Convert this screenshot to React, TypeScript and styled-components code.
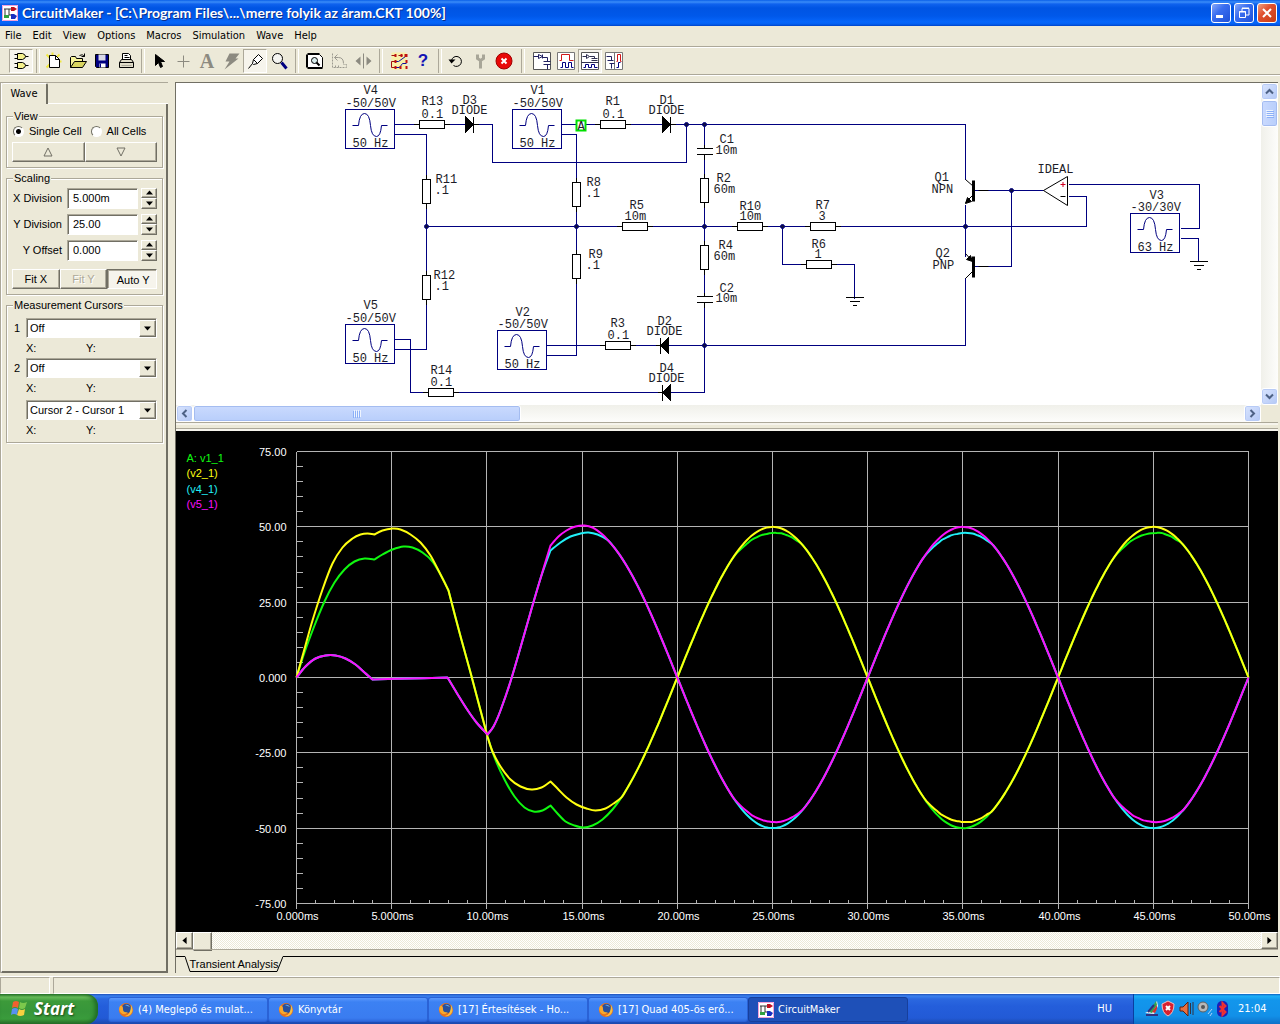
import React from 'react';
import styled, { createGlobalStyle, css } from 'styled-components';

const FACE = '#ece9d8';
const SHADOW = '#aca899';
const DARK = '#716f64';
const NAVY = '#000080';

const UI_FONT = '"DejaVu Sans Condensed", "Noto Sans", sans-serif';
const PANEL_FONT = '"Liberation Sans", Arial, sans-serif';

const GlobalStyle = createGlobalStyle`
  * { box-sizing: border-box; }
  body { margin: 0; background: ${FACE}; }
  button, input, select, fieldset { font: inherit; color: inherit; margin: 0; padding: 0; border: 0; }
  svg { display: block; flex: none; }
`;

const Desktop = styled.div`
  display: flex;
  flex-direction: column;
  min-height: 100vh;
  background: ${FACE};
  color: #000;
  font: 11px/14px ${PANEL_FONT};
  overflow: hidden;
`;

/* ---------- title bar ---------- */

const TitleBar = styled.header`
  display: flex;
  align-items: center;
  gap: 4px;
  height: 26px;
  padding: 0 3px 0 2px;
  background: linear-gradient(#0a5fe8 0, #3a8cf8 2px, #0f62ee 4px, #0054e3 8px, #0058ea 16px, #0666fb 22px, #0461f2 24px, #0043c8 26px);
`;

const Title = styled.h1`
  flex: 1;
  margin: 0;
  color: #fff;
  font: 700 14px/20px Lato, sans-serif;
  text-shadow: 1px 1px #0a2f8c;
  white-space: nowrap;
`;

const WindowButtons = styled.div`
  display: flex;
  gap: 3px;
`;

const WindowButton = styled.button<{ $close?: boolean }>`
  display: grid;
  place-items: center;
  width: 20px;
  height: 20px;
  border: 1px solid #fff;
  border-radius: 3px;
  background: ${p => (p.$close ? 'linear-gradient(135deg, #f0a080, #e05030 40%, #c83c14)' : 'linear-gradient(135deg, #88a8f8, #3a6ef0 40%, #1e50d8)')};
`;

/* ---------- menu and toolbar ---------- */

const MenuBar = styled.nav`
  display: flex;
  gap: 11px;
  height: 21px;
  padding: 0 5px;
  border-bottom: 1px solid ${SHADOW};
  font: 11px/18px ${UI_FONT};
`;

const MenuButton = styled.button`
  background: none;
`;

const ToolBar = styled.div`
  display: flex;
  align-items: center;
  height: 28px;
  padding-left: 9px;
  border-top: 1px solid #fff;
  border-bottom: 1px solid ${SHADOW};
  box-shadow: 0 1px #fff;
`;

const ToolButton = styled.button<{ $on?: boolean }>`
  display: grid;
  place-items: center;
  width: 24px;
  height: 24px;
  background: none;
  ${p =>
    p.$on &&
    css`
      background: #f6f4ec;
      border: 1px solid;
      border-color: ${SHADOW} #fff #fff ${SHADOW};
    `}
`;

const Separator = styled.span<{ $width: number }>`
  display: flex;
  justify-content: center;
  width: ${p => p.$width}px;
  height: 24px;
  &::before {
    content: '';
    width: 2px;
    border-left: 1px solid ${SHADOW};
    border-right: 1px solid #fff;
  }
`;

/* ---------- work area ---------- */

const Work = styled.main`
  display: flex;
  flex: 1;
  gap: 7px;
  padding: 7px 2px 3px 0;
`;

const Side = styled.aside`
  display: flex;
  flex-direction: column;
  flex: none;
  width: 168px;
  border-left: 1px solid ${SHADOW};
  border-top: 1px solid ${SHADOW};
`;

const SideTabs = styled.div`
  display: flex;
  height: 21px;
  border-left: 1px solid #fff;
`;

const SideTab = styled.button`
  width: 46px;
  background: ${FACE};
  border-top: 1px solid #fff;
  border-right: 2px solid ${DARK};
  border-radius: 2px 2px 0 0;
  font: 11px/18px ${UI_FONT};
`;

const TabLine = styled.span`
  flex: 1;
  border-bottom: 1px solid #fff;
`;

const SideBody = styled.div`
  display: flex;
  flex-direction: column;
  flex: 1;
  gap: 4px;
  padding: 6px 3px 6px 4px;
  border: solid;
  border-width: 0 2px 2px 1px;
  border-color: #fff ${DARK} ${DARK} #fff;
`;

const Group = styled.fieldset`
  display: flex;
  flex-direction: column;
  min-width: 0;
  padding: 0 5px 5px;
  border: 1px solid ${SHADOW};
  box-shadow: inset 1px 1px #fff, 1px 1px #fff;
`;

const Legend = styled.legend`
  margin-left: 1px;
  padding: 0 1px;
  background: ${FACE};
  line-height: 13px;
`;

const RadioRow = styled.div`
  display: flex;
  gap: 8px;
  height: 19px;
  padding-top: 1px;
`;

const RadioLabel = styled.label`
  display: flex;
  align-items: center;
  gap: 5px;
  height: 14px;
  padding-left: 1px;
`;

const Radio = styled.input`
  appearance: none;
  width: 11px;
  height: 11px;
  border: 1px solid;
  border-color: ${DARK} #fff #fff ${DARK};
  border-radius: 50%;
  background: #fff;
  &:checked {
    background: radial-gradient(circle, #000 0 2px, #fff 3px);
  }
`;

const ButtonRow = styled.div<{ $spaced?: boolean }>`
  display: flex;
  height: 20px;
  margin-top: ${p => (p.$spaced ? 6 : 0)}px;
`;

const raised = css`
  border: 1px solid;
  border-color: #fff ${DARK} ${DARK} #fff;
  box-shadow: inset -1px -1px ${SHADOW};
`;

const PanelButton = styled.button<{ $down?: boolean }>`
  display: grid;
  place-items: center;
  flex: 1;
  background: ${FACE};
  ${raised}
  &:disabled {
    color: ${SHADOW};
    text-shadow: 1px 1px #fff;
  }
  ${p =>
    p.$down &&
    css`
      padding: 2px 0 0 2px;
      background: #f6f4ec;
      border-color: ${DARK} #fff #fff ${DARK};
      box-shadow: inset 1px 1px ${SHADOW};
    `}
`;

const Field = styled.div`
  display: flex;
  align-items: center;
  justify-content: flex-end;
  height: 26px;
  gap: 3px;
`;

const FieldLabel = styled.label`
  padding-right: 2px;
`;

const sunken = css`
  background: #fff;
  border: 1px solid;
  border-color: ${SHADOW} #fff #fff ${SHADOW};
  box-shadow: inset 1px 1px ${DARK};
`;

const FieldInput = styled.input`
  width: 71px;
  height: 21px;
  padding-left: 5px;
  ${sunken}
`;

const Spin = styled.div`
  display: flex;
  flex-direction: column;
  width: 16px;
  height: 21px;
`;

const SpinButton = styled.button`
  display: grid;
  place-items: center;
  flex: 1;
  background: ${FACE};
  ${raised}
`;

const CursorGrid = styled.div`
  display: grid;
  grid-template-columns: 14px 1fr;
  padding-top: 6px;
`;

const CursorNumber = styled.label`
  padding: 3px 0 0 2px;
`;

const SelectBox = styled.div`
  display: grid;
  grid-template-columns: 1fr 17px;
  height: 20px;
  ${sunken}
`;

const Select = styled.select`
  grid-area: 1 / 1 / 2 / 3;
  appearance: none;
  padding-left: 3px;
  background: none;
`;

const SelectArrow = styled.span`
  grid-area: 1 / 2;
  display: grid;
  place-items: center;
  margin-top: 1px;
  background: ${FACE};
  pointer-events: none;
  ${raised}
`;

const Readout = styled.div<{ $height: number }>`
  grid-column: 2;
  display: grid;
  grid-template-columns: 60px 1fr;
  height: ${p => p.$height}px;
  padding-top: 3px;
`;

const Right = styled.section`
  display: flex;
  flex-direction: column;
  flex: 1;
  min-width: 0;
  border-top: 1px solid ${DARK};
  border-left: 1px solid ${DARK};
`;

const SchematicPane = styled.div`
  display: grid;
  grid-template-columns: 1fr 17px;
  grid-template-rows: 322px 17px;
  background: #fff;
`;

const Canvas = styled.div`
  min-width: 0;
  overflow: hidden;
`;

const Track = styled.div<{ $vertical?: boolean }>`
  display: flex;
  flex-direction: ${p => (p.$vertical ? 'column' : 'row')};
  justify-content: space-between;
  background: linear-gradient(${p => (p.$vertical ? '90deg' : '180deg')}, #f0f0ea, #fdfdfb);
`;

const ScrollStart = styled.div<{ $vertical?: boolean }>`
  display: flex;
  flex-direction: ${p => (p.$vertical ? 'column' : 'row')};
`;

const Corner = styled.span`
  background: ${FACE};
`;

const ScrollButton = styled.button`
  display: grid;
  place-items: center;
  width: 17px;
  height: 17px;
  border: 1px solid #fff;
  border-radius: 3px;
  background: linear-gradient(135deg, #d8e4fe, #b4c8f6);
  box-shadow: inset 0 0 0 1px #b8cbf6;
`;

const Thumb = styled.span<{ $vertical?: boolean }>`
  display: grid;
  place-items: center;
  width: ${p => (p.$vertical ? 17 : 328)}px;
  height: ${p => (p.$vertical ? 27 : 17)}px;
  border: 1px solid #fff;
  border-radius: 3px;
  background: linear-gradient(${p => (p.$vertical ? '90deg' : '180deg')}, #cadafe, #b8cefb);
  box-shadow: inset 0 0 0 1px #a4bcf0;
`;

const Splitter = styled.div`
  height: 9px;
  border-top: 1px solid ${SHADOW};
  background: linear-gradient(#f6f4ec 0 2px, ${FACE} 2px 5px, ${SHADOW} 5px 6px, #f6f4ec 6px);
`;

const WavePane = styled.div`
  flex: 1;
  min-height: 501px;
  overflow: hidden;
  background: #000;
`;

const ClassicTrack = styled.div`
  display: flex;
  height: 17px;
  background: repeating-conic-gradient(#fff 0 25%, ${FACE} 0 50%) 0 0 / 2px 2px;
`;

const ClassicButton = styled.button`
  display: grid;
  place-items: center;
  width: 17px;
  background: ${FACE};
  ${raised}
`;

const ClassicThumb = styled.span`
  flex: 1;
  &::before {
    content: '';
    display: block;
    width: 17px;
    height: 17px;
    background: ${FACE};
    ${raised}
  }
`;

const SheetTabs = styled.div`
  display: flex;
  height: 24px;
  padding-top: 6px;
  border-top: 1px solid ${SHADOW};
`;

const SheetLine = styled.span<{ $fill?: boolean }>`
  width: 9px;
  flex: ${p => (p.$fill ? '1' : 'none')};
  border-top: 1px solid #000;
`;

const SheetTab = styled.button`
  display: grid;
  width: 98px;
  height: 17px;
  background: none;
  line-height: 16px;
  white-space: nowrap;
  > * { grid-area: 1 / 1; }
`;

const StatusBar = styled.footer`
  display: flex;
  gap: 3px;
  height: 18px;
  border-top: 1px solid #fff;
`;

const StatusCell = styled.span<{ $fill?: boolean }>`
  width: 50px;
  flex: ${p => (p.$fill ? '1' : 'none')};
  border: 1px solid;
  border-color: ${SHADOW} #fff #fff ${SHADOW};
`;

/* ---------- taskbar ---------- */

const TaskBar = styled.footer`
  display: flex;
  align-items: stretch;
  height: 30px;
  color: #fff;
  font: 11px/14px ${UI_FONT};
  background: linear-gradient(#1f50b8 0, #3a80ee 2px, #2b68e0 5px, #245edb 12px, #225ad6 24px, #1b48ac 30px);
`;

const Start = styled.button`
  display: flex;
  align-items: center;
  gap: 6px;
  width: 98px;
  padding-left: 10px;
  border-radius: 0 12px 12px 0;
  color: #fff;
  font: italic 700 17px/22px "Open Sans", sans-serif;
  text-shadow: 1px 1px 2px #1a4a14;
  background: linear-gradient(#2c7c2c 0, #6cc05c 3px, #3c9a3a 7px, #37963a 18px, #3a9c3c 25px, #2a6e2a 30px);
  box-shadow: inset -3px 0 4px #1f6a24;
`;

const Tasks = styled.div`
  display: flex;
  flex: 1;
  padding: 3px 0 2px 10px;
`;

const Task = styled.button<{ $on?: boolean }>`
  display: flex;
  align-items: center;
  gap: 4px;
  width: 160px;
  padding-left: 9px;
  border: 1px solid ${p => (p.$on ? '#173f9c' : '#2a62d6')};
  border-radius: 3px;
  text-align: left;
  white-space: nowrap;
  background: ${p => (p.$on ? '#1e50b8' : 'linear-gradient(#5a98fc 0, #3c81f3 4px, #3a7cf0 20px, #2f6ade)')};
`;

const Language = styled.span`
  padding: 8px 21px 0 0;
`;

const Tray = styled.div`
  display: flex;
  align-items: center;
  gap: 3px;
  width: 147px;
  padding-left: 10px;
  border-left: 1px solid #0a3ea0;
  background: linear-gradient(#0c60c0 0, #1cb0f8 2px, #1296ec 6px, #1290e8 22px, #0f70c8 30px);
`;

const Clock = styled.time`
  margin-left: 7px;
`;

/* ---------- icons ---------- */

const Icon = ({ children, size = 18 }: { children: React.ReactNode; size?: number }) => (
  <svg width={size} height={size} viewBox="-0.5 -0.5 18 18" fill="none" stroke="#000" aria-hidden>
    {children}
  </svg>
);

const icons: Record<string, React.ReactNode> = {
  gates: (
    <>
      <path d="M5 1h5q3 1 3 3t-3 3H5zM5 10h5q3 1 3 3t-3 3H5z" fill="#f4f08c" />
      <path d="M2 2h3M2 6h3M13 4h3M2 11h3M2 15h3M13 13h3" />
    </>
  ),
  new: (
    <>
      <path d="M1 2l3 3M14 2l-3 3M1 15l3-3M16 9h-3M7 0v3" stroke="#f0e840" strokeWidth="2" />
      <path d="M4 3h6l4 4v8H4z" fill="#fff" />
      <path d="M10 3v4h4" />
    </>
  ),
  open: (
    <>
      <path d="M1 15V5l1-1h4l1 2h6v3" fill="#f7f49a" />
      <path d="M1 15l4-6h12l-4 6z" fill="#d8d460" />
      <path d="M10 3q3-2 5 1M15 1v3h-3" />
    </>
  ),
  save: (
    <>
      <path d="M2 2h13v13H3l-1-1z" fill={NAVY} />
      <path d="M5 2h7v6H5z" fill="#d8d8e8" stroke="none" />
      <path d="M6 11h6v4H6z" fill="#fff" stroke="none" />
      <path d="M7 11v4" stroke={NAVY} />
    </>
  ),
  print: (
    <>
      <path d="M5 7V1h6l2 2v4" fill="#fff" />
      <path d="M2 10l2-3h10l2 3v5H2zM2 10h14M7 3h3M7 5h5" fill="#e0dcc8" />
      <path d="M4 13h10" stroke={SHADOW} />
    </>
  ),
  arrow: <path d="M5 2v11l3-3 2 5 2-1-2-5h4z" fill="#000" />,
  plus: <path d="M9 3v12M3 9h12" stroke="#8c8a80" />,
  bolt: <path d="M7 1h10l-4 5h3L2 17l5-8H3z" fill="#8c8a80" stroke="none" />,
  probe: <path d="M2 16l4-5M6 11l1-4 5-5 4 4-5 5-4 1zM7 7l4 4" fill="#fff" />,
  zoom: (
    <>
      <circle cx="7" cy="6" r="5" fill="#f4f4f0" />
      <path d="M11 10l5 6" stroke={NAVY} strokeWidth="3" />
    </>
  ),
  fit: (
    <>
      <path d="M1 2h12l3 3v10H1z" fill="#fff" />
      <path d="M1 1h12M0 2v13M1 16h15" />
      <circle cx="8" cy="8" r="3" fill="#d8ecec" />
      <path d="M10 10l3 3" strokeWidth="2" />
    </>
  ),
  rotate: (
    <g stroke="#9c9a90">
      <path d="M2 1v14h14v-3h-3M5 15v-3M8 15v-3" strokeDasharray="2 1" />
      <path d="M4 5h4q5 0 5 6M7 2L4 5l3 3" />
    </g>
  ),
  mirror: (
    <>
      <path d="M9 1v15" stroke="#8c8a80" />
      <path d="M6 4v9L1 8.500zM12 4v9l5-4.500z" fill="#8c8a80" stroke="none" />
    </>
  ),
  netlist: (
    <>
      <path d="M1 0h15v17H1z" fill="#f8f0a8" stroke="none" />
      <path d="M1 3h4M1 9h4M1 15h4M1 9v6M8 3h4" stroke="#a01010" />
      <path d="M5 9h3l7-5M5 15h4l3-4h4" stroke="#1010a0" />
      <path d="M4 3h2M10 3h2M14 3h3M4 9h2M15 9h2M4 15h2M9 15h2M15 15h2" stroke="#c01010" strokeWidth="3" />
    </>
  ),
  reset: (
    <>
      <path d="M4 8a5 5 0 1 1 2 5" />
      <path d="M1 7h7l-4 4z" fill="#000" stroke="none" />
    </>
  ),
  tool: <path d="M6 2v4l3 2 3-2V2M9 7v9" stroke="#a8a698" strokeWidth="3" />,
  stop: (
    <>
      <circle cx="8.500" cy="8.500" r="8" fill="#e80808" stroke="#a00000" />
      <path d="M6 6l5 5M11 6l-5 5" stroke="#fff" strokeWidth="2" />
    </>
  ),
  viewSchematic: (
    <>
      <path d="M0 0h17v17H0z" fill="#fff" stroke="#555" />
      <path d="M0 4h5M5 2v4l4-2zM9 2v4M9 5h5v4M10 9h7M10 12h7M14 12v5" stroke="#202060" />
    </>
  ),
  viewWave: (
    <>
      <path d="M0 0h17v17H0z" fill="#fff" stroke="#777" />
      <path d="M2 8h2V2h8v6h4" stroke="#d01818" />
      <path d="M3 15h2v-5h3v5h3v-5h3v5h2" stroke={NAVY} />
    </>
  ),
  viewBoth: (
    <>
      <path d="M0 0h17v17H0z" fill="#fff" stroke="#555" />
      <path d="M1 4h4M5 2v4l3-2zM8 4h5v2M10 6h6M10 8h6M0 10h17" stroke="#303050" />
      <path d="M2 15h2v-3h3v3h3v-3h3v3h3" stroke={NAVY} />
    </>
  ),
  viewSide: (
    <>
      <path d="M0 0h17v17H0zM9 0v17" fill="#fff" stroke="#777" />
      <path d="M1 4h5v4M2 8h6M4 11h5M6 11v5" stroke="#202060" />
      <path d="M11 9h1V2h3v7h1" stroke="#d01818" />
      <path d="M11 15h2v-5h2" stroke={NAVY} />
    </>
  ),
};

const GlyphA = styled.span`
  color: #8c8a80;
  font: 700 20px/20px "Liberation Serif", serif;
`;

const GlyphHelp = styled.span`
  color: #1414b4;
  font: 700 17px/18px "Liberation Sans", sans-serif;
`;

const AppIcon = () => (
  <svg width="16" height="16" viewBox="0 0 16 16" aria-hidden>
    <path d="M0 0h16v16H0z" fill="#fff" />
    <path d="M0.500 0.500h15v15H0.500z" fill="none" stroke="#f0a0d8" />
    <path d="M2 4h8M3 4v6M7 4v6h3" stroke="#333" fill="none" />
    <path d="M9 2h3l3 2-3 2H9z" fill="#c01020" />
    <path d="M9 9h3l3 2-2 3H9z" fill="#1830c0" />
    <path d="M2 10h5v3H2z" fill="#30a040" />
  </svg>
);

const Firefox = () => (
  <svg width="16" height="16" viewBox="0 0 16 16" aria-hidden>
    <circle cx="8" cy="8" r="7" fill="#e8701c" />
    <circle cx="8.500" cy="6.500" r="4.800" fill="#28509c" />
    <path d="M2 4q3-1 3 3 0 4 5 3-3 4-7 1-3-3-1-7z" fill="#f8a82c" />
    <path d="M13 3q3 5 0 9-3 3-6 2 6-1 6-11z" fill="#f8c040" />
    <path d="M7 3q3-1 5 2-3-1-5-2z" fill="#6cb0e8" />
  </svg>
);

const Flag = () => (
  <svg width="18" height="18" viewBox="0 0 18 18" aria-hidden>
    <path d="M3 2q3-2 6 0L8 8q-3-2-6 0z" fill="#f06030" />
    <path d="M10 2q3 2 7 0l-2 6q-3 2-6 0z" fill="#7cc84c" />
    <path d="M2 9q3-2 6 0l-1 6q-3-2-6 0z" fill="#5890f0" />
    <path d="M9 9q3 2 6 0l-1 6q-4 2-7 0z" fill="#f8d040" />
  </svg>
);

const Tri = ({ dir, hollow }: { dir: 'up' | 'down' | 'left' | 'right'; hollow?: boolean }) => {
  const size = hollow ? 10 : 7;
  const turn = { up: 0, right: 90, down: 180, left: 270 }[dir];
  return (
    <svg width={size} height={size} viewBox="0 0 10 10" aria-hidden>
      <path
        d={hollow ? 'M5 1L9 9H1z' : 'M5 2L10 8H0z'}
        transform={`rotate(${turn} 5 5)`}
        fill={hollow ? 'none' : '#000'}
        stroke={hollow ? DARK : 'none'}
      />
    </svg>
  );
};

const Chevron = ({ turn }: { turn: number }) => (
  <svg width="9" height="9" viewBox="0 0 9 9" aria-hidden>
    <path d="M1 6.500L4.500 3 8 6.500" transform={`rotate(${turn} 4.500 4.500)`} fill="none" stroke="#4d6185" strokeWidth="2" />
  </svg>
);

const Grip = ({ turn }: { turn: number }) => (
  <svg width="8" height="8" viewBox="0 0 8 8" aria-hidden>
    <g transform={`rotate(${turn} 4 4)`} shapeRendering="crispEdges">
      <path d="M0 .5h7M0 2.500h7M0 4.500h7M0 6.500h7" stroke="#eef4fe" />
      <path d="M1 1.500h7M1 3.500h7M1 5.500h7M1 7.500h7" stroke="#8cb0f8" />
    </g>
  </svg>
);

/* ---------- schematic ---------- */

const SchematicText = styled.text`
  fill: #1c1c28;
  font: 12px "Liberation Mono", monospace;
`;

type At = { x: number; y: number };

const Source = ({ x, y, hz = '50 Hz' }: At & { hz?: string }) => (
  <g stroke={NAVY} fill="none">
    <rect x={x} y={y} width="49" height="39" shapeRendering="crispEdges" />
    <path d={`M${x + 7} ${y + 16}h6q1-12 6-12 5 0 6 12 1 11 6 11 4 0 5-11h6`} />
    <SchematicText x={x + 7} y={y + 37} stroke="none">{hz}</SchematicText>
  </g>
);

const ResistorH = ({ x, y }: At) => <path d={`M${x - 6} ${y}h6M${x + 25} ${y}h5M${x} ${y - 4}h25v8h-25z`} fill="#fff" />;
const ResistorV = ({ x, y }: At) => <path d={`M${x} ${y - 5}v5M${x} ${y + 24}v5M${x - 4} ${y}h8v24h-8z`} fill="#fff" />;
const Capacitor = ({ x, y }: At) => (
  <>
    <path d={`M${x - 8} ${y}h16v6h-16z`} fill="#fff" stroke="none" />
    <path d={`M${x - 8} ${y}h16M${x - 8} ${y + 6}h16M${x} ${y - 4}v4M${x} ${y + 6}v5`} />
  </>
);
const Diode = ({ x, y, back }: At & { back?: boolean }) => (
  <>
    <path d={back ? `M${x + 8} ${y - 8}v16l-8-8z` : `M${x} ${y - 8}v16l8-8z`} fill="#000" />
    <path d={back ? `M${x} ${y - 8}v16M${x - 5} ${y}h5` : `M${x + 8} ${y - 8}v16M${x + 8} ${y}h5`} />
  </>
);
const Ground = ({ x, y }: At) => <path d={`M${x - 9} ${y}h18M${x - 5} ${y + 4}h10M${x - 2} ${y + 8}h4`} />;

const labels: [number, number, string][] = [
  [363, 93, 'V4'], [345, 106, '-50/50V'], [421, 104, 'R13'], [421, 117, '0.1'],
  [462, 103, 'D3'], [451, 113, 'DIODE'], [530, 93, 'V1'], [512, 106, '-50/50V'],
  [605, 104, 'R1'], [602, 117, '0.1'], [659, 103, 'D1'], [648, 113, 'DIODE'],
  [719, 142, 'C1'], [715, 153, '10m'], [716, 181, 'R2'], [713, 192, '60m'],
  [435, 182, 'R11'], [434, 193, '.1'], [586, 185, 'R8'], [585, 196, '.1'],
  [629, 208, 'R5'], [624, 219, '10m'], [739, 209, 'R10'], [739, 219, '10m'],
  [815, 208, 'R7'], [818, 219, '3'], [811, 247, 'R6'], [814, 257, '1'],
  [718, 248, 'R4'], [713, 259, '60m'], [588, 257, 'R9'], [585, 268, '.1'],
  [719, 291, 'C2'], [715, 301, '10m'], [433, 278, 'R12'], [434, 289, '.1'],
  [363, 308, 'V5'], [345, 321, '-50/50V'], [515, 315, 'V2'], [497, 327, '-50/50V'],
  [610, 326, 'R3'], [607, 338, '0.1'], [657, 324, 'D2'], [646, 334, 'DIODE'],
  [659, 371, 'D4'], [648, 381, 'DIODE'], [430, 373, 'R14'], [430, 385, '0.1'],
  [934, 180, 'Q1'], [931, 192, 'NPN'], [935, 256, 'Q2'], [932, 268, 'PNP'],
  [1037, 172, 'IDEAL'], [1149, 198, 'V3'], [1130, 210, '-30/30V'],
];

const wires = [
  'M394 124h71M478 124h14v38h194v-38M394 134h32v215h-32',
  'M561 124h104M674 124h291v55M561 134h15v221h-30',
  'M426 226h660v-30h-18M704 124v268H410v-53h-16M546 345h419v-68',
  'M965 204v52M974 190h69M974 266h37v-76M1068 184h131v44h-19M1180 238h18v23',
  'M782 226v38h72v34',
];

const nodes = [[686, 124], [704, 124], [426, 226], [576, 226], [704, 226], [782, 226], [965, 226], [1011, 190], [704, 345]];

const Schematic = () => (
  <svg width="1085" height="322" viewBox="175.500 82.500 1085 322" fill="none" stroke="#000" role="img" aria-label="Circuit schematic">
    <g shapeRendering="crispEdges">
      {wires.map(d => <path key={d} d={d} stroke={NAVY} />)}
      <ResistorH x={419} y={124} />
      <ResistorH x={600} y={124} />
      <ResistorH x={622} y={226} />
      <ResistorH x={737} y={226} />
      <ResistorH x={810} y={226} />
      <ResistorH x={806} y={264} />
      <ResistorH x={605} y={345} />
      <ResistorH x={428} y={392} />
      <ResistorV x={426} y={179} />
      <ResistorV x={576} y={182} />
      <ResistorV x={704} y={178} />
      <ResistorV x={704} y={245} />
      <ResistorV x={576} y={254} />
      <ResistorV x={426} y={275} />
      <Capacitor x={704} y={148} />
      <Capacitor x={704} y={296} />
      <Diode x={465} y={124} />
      <Diode x={662} y={124} />
      <Diode x={660} y={345} back />
      <Diode x={662} y={392} back />
      <Ground x={854} y={297} />
      <Ground x={1198} y={261} />
    </g>
    <Source x={345} y={109} />
    <Source x={512} y={109} />
    <Source x={345} y={324} />
    <Source x={497} y={330} />
    <Source x={1130} y={213} hz="63 Hz" />
    <path d="M973 180v21M973 256v21" strokeWidth="3" />
    <path d="M965 179l8 7M973 194l-8 8M965 253l8 9M973 270l-8 8M978 190h10M978 266h10" />
    <path d="M965 203l2-6 4 4zM972 261l-6-2 4-4z" fill="#000" />
    <path d="M1043 190l24-14v29z" fill="#fff" />
    <path d="M1060 196h5" />
    <path d="M1060 184h5M1062.500 181.500v5" stroke="#d00020" />
    {nodes.map(([x, y]) => <circle key={`${x}-${y}`} cx={x} cy={y} r="2" fill="#101040" stroke={NAVY} />)}
    <rect x="576" y="120" width="9" height="10" fill="#fff" stroke="#00e000" strokeWidth="2" />
    <SchematicText x="577" y="129" stroke="none">A</SchematicText>
    <g stroke="none">
      {labels.map(([x, y, t]) => <SchematicText key={`${x}-${y}`} x={x} y={y}>{t}</SchematicText>)}
    </g>
  </svg>
);

/* ---------- wave plot ---------- */

type Point = [number, number];

const ZERO_Y = 677;
const VOLT = 3.013;
const MS = 19.04;

const toX = (ms: number) => 296 + ms * MS;
const toMs = (x: number) => (x - 296) / MS;
const toY = (v: number) => ZERO_Y - v * VOLT;
const sine = (ms: number) => 50 * Math.sin((Math.PI * ms) / 10);

// Loaded crest: offset from its centre in pixels, and level in volts.
const crest: Point[] = [[-38, 40.500], [-30, 43.200], [-20, 45.900], [-10, 47.400], [0, 48], [8, 48], [18, 46.800], [28, 44.600]];

const steady = (from: number, sign: number, loaded: number[]): Point[] => {
  const out: Point[] = [];
  for (let x = from; x < 1246; x += 5) {
    const centre = loaded.find(ms => x >= toX(ms) - 38 && x <= toX(ms) + 28);
    if (centre === undefined) {
      out.push([x, toY(sign * sine(toMs(x)))]);
    } else {
      const dx = x - toX(centre);
      const i = Math.max(0, crest.findIndex(([cx]) => cx >= dx) - 1);
      const [a, b] = [crest[i], crest[i + 1]];
      const level = a[1] + ((b[1] - a[1]) * (dx - a[0])) / (b[0] - a[0]);
      out.push([x, toY(level * Math.sign(sign * sine(centre)))]);
    }
  }
  out.push([1248, ZERO_Y]);
  return out;
};

const yellowStart: Point[] = [
  [296, 677], [303, 652], [312, 620], [322, 589], [332, 563], [342, 547], [352, 538], [360, 534], [367, 533], [374, 534],
  [382, 530], [392, 528], [400, 529], [410, 534], [420, 542], [430, 555], [440, 574], [448, 590], [459, 632], [470, 672],
  [479, 706], [487, 736], [492, 751], [500, 766], [510, 779], [520, 786], [531, 789], [541, 787], [550, 781], [557, 788],
  [566, 797], [576, 804], [586, 808], [595, 810], [605, 808], [613, 803],
];
const greenStart: Point[] = [
  [296, 677], [304, 652], [314, 625], [324, 601], [334, 582], [344, 569], [354, 561], [364, 558], [374, 559], [382, 554],
  [392, 549], [403, 546], [412, 547], [422, 552], [432, 561], [440, 574], [448, 590], [459, 632], [470, 672], [479, 706],
  [487, 736], [494, 757], [504, 779], [514, 796], [524, 807], [533, 811], [542, 810], [550, 805], [557, 813], [565, 821],
  [574, 825], [583, 827], [592, 825], [602, 819], [612, 809],
];
const magentaStart: Point[] = [
  [296, 677], [305, 666], [315, 658], [325, 655], [335, 655], [345, 658], [355, 664], [364, 672], [372, 679], [410, 678],
  [447, 677], [456, 692], [466, 708], [476, 722], [487, 734], [493, 726], [500, 710], [510, 681], [520, 647], [530, 612],
  [540, 578], [550, 545], [558, 536], [566, 530], [575, 526], [584, 525], [592, 527], [602, 534],
];
const cyanStart: Point[] = [
  ...magentaStart.slice(0, 21), [550, 550], [560, 542], [570, 536], [580, 533], [588, 532], [597, 534],
];

// The waveforms turn sharply where a diode starts or stops conducting.
const corners = new Set([372, 374, 447, 448, 487, 550]);

const curve = (p: Point[]) => {
  let d = `M${p[0][0]} ${p[0][1]}`;
  for (let i = 0; i < p.length - 1; i++) {
    const [x1, y1] = p[i];
    const [x2, y2] = p[i + 1];
    const [x0, y0] = i === 0 || corners.has(x1) ? p[i] : p[i - 1];
    const [x3, y3] = i + 2 >= p.length || corners.has(x2) ? p[i + 1] : p[i + 2];
    const c = [x1 + (x2 - x0) / 6, y1 + (y2 - y0) / 6, x2 - (x3 - x1) / 6, y2 - (y3 - y1) / 6, x2, y2];
    d += `C${c.map(n => n.toFixed(1)).join(' ')}`;
  }
  return d;
};

const traces = [
  { name: 'A: v1_1', color: '#10f810', d: curve([...greenStart, ...steady(621, 1, [25, 45])]) },
  { name: '(v4_1)', color: '#20f0f8', d: curve([...cyanStart, ...steady(607, -1, [35])]) },
  { name: '(v2_1)', color: '#ffff10', d: curve([...yellowStart, ...steady(621, 1, [35])]) },
  { name: '(v5_1)', color: '#fc10fc', d: curve([...magentaStart, ...steady(608, -1, [25, 45])]) },
];

const legend = [traces[0], traces[2], traces[1], traces[3]];

const PlotText = styled.text`
  font: 11px "Liberation Sans", Arial, sans-serif;
`;

const volts = [75, 50, 25, 0, -25, -50, -75];
const times = Array.from({ length: 11 }, (_, i) => i * 5);
const fmt = (n: number) => (n === 0 ? '0.000' : n.toFixed(Math.abs(n) < 10 ? 3 : 2));

const Plot = () => (
  <svg width="1102" height="501" viewBox="175.500 430.500 1102 501" fill="none" role="img" aria-label="Transient analysis waveforms">
    <g stroke="#b4b4b4" shapeRendering="crispEdges">
      {volts.map(v => <path key={v} d={`M296 ${Math.round(toY(v))}H1248`} />)}
      {times.map(t => <path key={t} d={`M${Math.round(toX(t))} 451V908`} />)}
      {Array.from({ length: 51 }, (_, i) => <path key={i} d={`M${Math.round(toX(i))} 903v-4`} />)}
      {Array.from({ length: 31 }, (_, i) => <path key={i} d={`M296 ${Math.round(451 + i * 15.067)}h6`} />)}
    </g>
    {traces.map(t => <path key={t.name} d={t.d} stroke={t.color} strokeWidth="2" strokeLinejoin="round" />)}
    {legend.map((t, i) => <PlotText key={t.name} x="186" y={461 + Math.round(i * 15.400)} fill={t.color}>{t.name}</PlotText>)}
    {volts.map(v => <PlotText key={v} x="286" y={Math.round(toY(v)) + 4} fill="#fff" textAnchor="end">{fmt(v)}</PlotText>)}
    {times.map(t => <PlotText key={t} x={Math.round(toX(t)) + 1} y="919" fill="#fff" textAnchor="middle">{fmt(t)}ms</PlotText>)}
  </svg>
);

/* ---------- page ---------- */

type Tool = { icon: string; name: string; on?: boolean };

const toolGroups: { lead: number; tools: Tool[] }[] = [
  { lead: 0, tools: [{ icon: 'gates', name: 'Digital', on: true }] },
  {
    lead: 9,
    tools: [
      { icon: 'new', name: 'New' }, { icon: 'open', name: 'Open' },
      { icon: 'save', name: 'Save' }, { icon: 'print', name: 'Print' },
    ],
  },
  {
    lead: 9,
    tools: [
      { icon: 'arrow', name: 'Select' }, { icon: 'plus', name: 'Wire' }, { icon: 'A', name: 'Text' },
      { icon: 'bolt', name: 'Delete' }, { icon: 'probe', name: 'Probe', on: true }, { icon: 'zoom', name: 'Zoom' },
    ],
  },
  { lead: 12, tools: [{ icon: 'fit', name: 'Fit' }, { icon: 'rotate', name: 'Rotate' }, { icon: 'mirror', name: 'Mirror' }] },
  { lead: 12, tools: [{ icon: 'netlist', name: 'Trace' }, { icon: '?', name: 'Help' }] },
  { lead: 9, tools: [{ icon: 'reset', name: 'Reset' }, { icon: 'tool', name: 'Setup' }, { icon: 'stop', name: 'Stop' }] },
  {
    lead: 14,
    tools: [
      { icon: 'viewSchematic', name: 'Schematic' }, { icon: 'viewWave', name: 'Waveforms' },
      { icon: 'viewBoth', name: 'Split horizontally', on: true }, { icon: 'viewSide', name: 'Split vertically' },
    ],
  },
];

const toolGlyph = (icon: string) => {
  if (icon === 'A') return <GlyphA>A</GlyphA>;
  if (icon === '?') return <GlyphHelp>?</GlyphHelp>;
  return <Icon>{icons[icon]}</Icon>;
};

const menus = ['File', 'Edit', 'View', 'Options', 'Macros', 'Simulation', 'Wave', 'Help'];
const fields = [['X Division', '5.000m'], ['Y Division', '25.00'], ['Y Offset', '0.000']];
const tasks = ['(4) Meglepő és mulat...', 'Könyvtár', '[17] Értesítések - Ho...', '[17] Quad 405-ös erő...'];

const DropDown = ({ id, value, label }: { id: string; value: string; label?: string }) => (
  <SelectBox>
    <Select id={id} aria-label={label}>
      <option>{value}</option>
    </Select>
    <SelectArrow><Tri dir="down" /></SelectArrow>
  </SelectBox>
);

export default function App() {
  return (
    <Desktop>
      <GlobalStyle />
      <TitleBar>
        <AppIcon />
        <Title>{'CircuitMaker - [C:\\Program Files\\...\\merre folyik az áram.CKT 100%]'}</Title>
        <WindowButtons>
          <WindowButton aria-label="Minimize">
            <svg width="12" height="12"><path d="M1 9.500h7" stroke="#fff" strokeWidth="3" /></svg>
          </WindowButton>
          <WindowButton aria-label="Restore">
            <svg width="12" height="12" fill="none" stroke="#fff"><path d="M4 4V1.500h7V8H8M1.500 4.500h6v6h-6zM4 1h7M1 5h7" /></svg>
          </WindowButton>
          <WindowButton $close aria-label="Close">
            <svg width="12" height="12"><path d="M2 2l8 8M10 2l-8 8" stroke="#fff" strokeWidth="2" /></svg>
          </WindowButton>
        </WindowButtons>
      </TitleBar>

      <MenuBar>{menus.map(m => <MenuButton key={m}>{m}</MenuButton>)}</MenuBar>

      <ToolBar>
        {toolGroups.map(group => (
          <React.Fragment key={group.tools[0].icon}>
            {group.lead > 0 && <Separator $width={group.lead} />}
            {group.tools.map(t => (
              <ToolButton key={t.icon} $on={t.on} aria-label={t.name}>{toolGlyph(t.icon)}</ToolButton>
            ))}
          </React.Fragment>
        ))}
      </ToolBar>

      <Work>
        <Side>
          <SideTabs>
            <SideTab>Wave</SideTab>
            <TabLine />
          </SideTabs>
          <SideBody>
            <Group>
              <Legend>View</Legend>
              <RadioRow>
                <RadioLabel><Radio type="radio" name="cells" defaultChecked />Single Cell</RadioLabel>
                <RadioLabel><Radio type="radio" name="cells" />All Cells</RadioLabel>
              </RadioRow>
              <ButtonRow>
                <PanelButton aria-label="Previous cell"><Tri dir="up" hollow /></PanelButton>
                <PanelButton aria-label="Next cell"><Tri dir="down" hollow /></PanelButton>
              </ButtonRow>
            </Group>
            <Group>
              <Legend>Scaling</Legend>
              {fields.map(([name, value]) => (
                <Field key={name}>
                  <FieldLabel htmlFor={name}>{name}</FieldLabel>
                  <FieldInput id={name} defaultValue={value} />
                  <Spin>
                    <SpinButton aria-label={`${name} up`}><Tri dir="up" /></SpinButton>
                    <SpinButton aria-label={`${name} down`}><Tri dir="down" /></SpinButton>
                  </Spin>
                </Field>
              ))}
              <ButtonRow $spaced>
                <PanelButton>Fit X</PanelButton>
                <PanelButton disabled>Fit Y</PanelButton>
                <PanelButton $down>Auto Y</PanelButton>
              </ButtonRow>
            </Group>
            <Group>
              <Legend>Measurement Cursors</Legend>
              <CursorGrid>
                <CursorNumber htmlFor="cursor1">1</CursorNumber>
                <DropDown id="cursor1" value="Off" />
                <Readout $height={20}><span>X:</span><span>Y:</span></Readout>
                <CursorNumber htmlFor="cursor2">2</CursorNumber>
                <DropDown id="cursor2" value="Off" />
                <Readout $height={22}><span>X:</span><span>Y:</span></Readout>
                <span />
                <DropDown id="difference" value="Cursor 2 - Cursor 1" label="Difference" />
                <Readout $height={17}><span>X:</span><span>Y:</span></Readout>
              </CursorGrid>
            </Group>
          </SideBody>
        </Side>

        <Right>
          <SchematicPane>
            <Canvas><Schematic /></Canvas>
            <Track $vertical>
              <ScrollStart $vertical>
                <ScrollButton aria-label="Scroll up"><Chevron turn={0} /></ScrollButton>
                <Thumb $vertical><Grip turn={0} /></Thumb>
              </ScrollStart>
              <ScrollButton aria-label="Scroll down"><Chevron turn={180} /></ScrollButton>
            </Track>
            <Track>
              <ScrollStart>
                <ScrollButton aria-label="Scroll left"><Chevron turn={270} /></ScrollButton>
                <Thumb><Grip turn={90} /></Thumb>
              </ScrollStart>
              <ScrollButton aria-label="Scroll right"><Chevron turn={90} /></ScrollButton>
            </Track>
            <Corner />
          </SchematicPane>
          <Splitter />
          <WavePane><Plot /></WavePane>
          <ClassicTrack>
            <ClassicButton aria-label="Scroll left"><Tri dir="left" /></ClassicButton>
            <ClassicThumb />
            <ClassicButton aria-label="Scroll right"><Tri dir="right" /></ClassicButton>
          </ClassicTrack>
          <SheetTabs>
            <SheetLine />
            <SheetTab>
              <svg width="98" height="17" fill="none" stroke="#000" aria-hidden><path d="M0 .5l5 15h87l6-15" /></svg>
              <span>Transient Analysis</span>
            </SheetTab>
            <SheetLine $fill />
          </SheetTabs>
        </Right>
      </Work>

      <StatusBar>
        <StatusCell />
        <StatusCell $fill />
      </StatusBar>

      <TaskBar>
        <Start><Flag />Start</Start>
        <Tasks>
          {tasks.map(t => <Task key={t}><Firefox />{t}</Task>)}
          <Task $on><AppIcon />CircuitMaker</Task>
        </Tasks>
        <Language>HU</Language>
        <Tray>
          <svg width="84" height="18" viewBox="0 0 84 18" fill="none" aria-hidden>
            <path d="M1 13l4-2 8-10 1 5-4 8z" fill="#f0f0f0" />
            <path d="M5 12L12 1l1 4-5 8z" fill="#30a050" />
            <path d="M8 12l5-7v4l-2 4z" fill="#d03030" />
            <path d="M2 15h12M4 12l6-7" stroke="#303080" strokeWidth="2" />
            <path d="M24 1l6 3q0 9-6 12-6-3-6-12z" fill="#d82030" stroke="#f0c0c0" />
            <path d="M22 6l4 4M26 6l-4 4" stroke="#fff" strokeWidth="2" />
            <path d="M36 7h3l5-5v14l-5-5h-3z" fill="#e87040" stroke="#602010" />
            <path d="M46.500 3v11M49 2v13" stroke="#334" />
            <circle cx="59" cy="7" r="5" fill="#b8b8b8" stroke="#606060" />
            <circle cx="59" cy="7" r="2" fill="#555" />
            <path d="M64 14l4-5M66 16l2-3" stroke="#b0d0f8" />
            <rect x="73" y="1" width="11" height="16" rx="5" fill="#1a20b8" />
            <path d="M75.500 6l6 6-3 3V3l3 3-6 6" stroke="#f03030" strokeWidth="2" />
          </svg>
          <Clock>21:04</Clock>
        </Tray>
      </TaskBar>
    </Desktop>
  );
}
